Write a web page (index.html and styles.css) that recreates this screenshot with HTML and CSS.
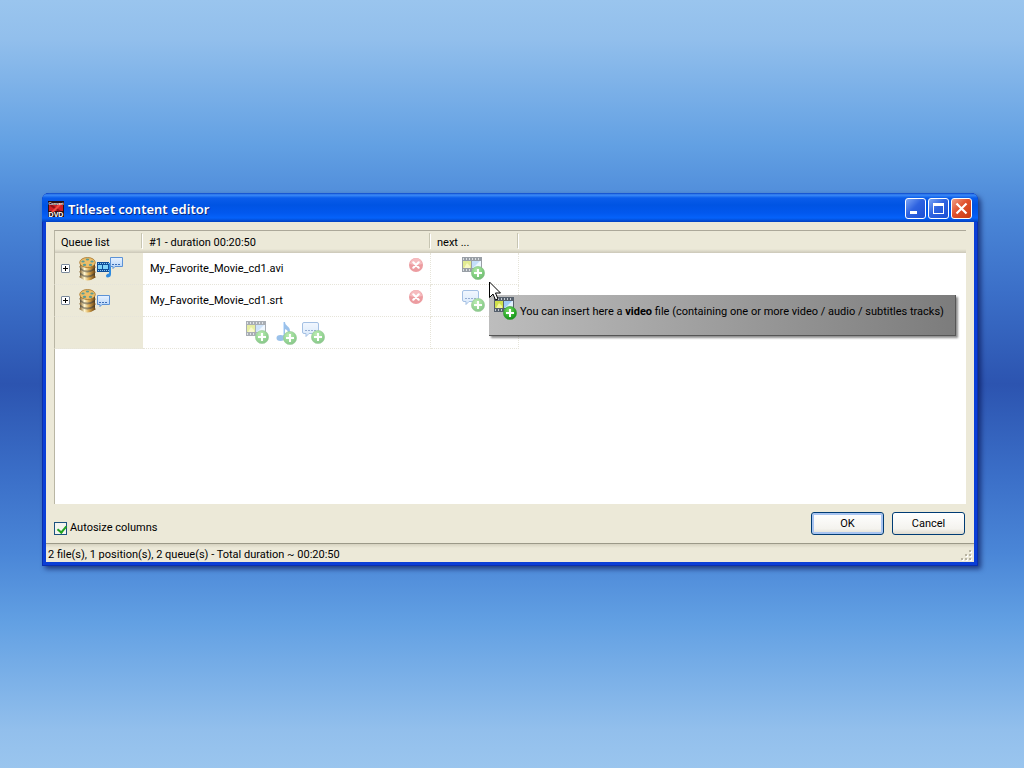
FILE: index.html
```html
<!DOCTYPE html>
<html lang="en">
<head>
    <meta charset="utf-8">
    <title>Titleset content editor</title>
    <meta name="viewport" content="width=device-width, initial-scale=1">
    <link rel="stylesheet" href="styles.css">
</head>
<body>

<svg class="defs" aria-hidden="true">
    <defs>
        <radialGradient id="g-green" cx="40%" cy="30%" r="75%">
            <stop offset="0" stop-color="#7fdc6c"/>
            <stop offset="0.6" stop-color="#2fae2c"/>
            <stop offset="1" stop-color="#128a17"/>
        </radialGradient>
        <linearGradient id="g-gold" x1="0" x2="1" y1="0" y2="0">
            <stop offset="0" stop-color="#8a6a38"/>
            <stop offset="0.3" stop-color="#fff6cf"/>
            <stop offset="0.6" stop-color="#d9a850"/>
            <stop offset="1" stop-color="#6b4516"/>
        </linearGradient>
        <linearGradient id="g-dark" x1="0" x2="1" y1="0" y2="0">
            <stop offset="0" stop-color="#5b5340"/>
            <stop offset="0.3" stop-color="#a89f82"/>
            <stop offset="1" stop-color="#4d3a1c"/>
        </linearGradient>
        <linearGradient id="g-sub" x1="0" x2="0" y1="0" y2="1">
            <stop offset="0" stop-color="#e6f1ff"/>
            <stop offset="1" stop-color="#b4d3f7"/>
        </linearGradient>
    </defs>
    <symbol id="plus" viewBox="0 0 14 14">
        <circle cx="7" cy="7" r="6.6" fill="url(#g-green)" stroke="#3c9b3a" stroke-width=".6"/>
        <path d="M7 3v8M3 7h8" stroke="#fff" stroke-width="2"/>
    </symbol>
    <symbol id="film" viewBox="0 0 24 24">
        <path fill="#56606c" d="M0 0h20v15H0z"/>
        <path fill="#cfdf4a" d="M1 4h8v7H1z"/>
        <path fill="#f4f59a" d="M2 11l3-5 3 3v2z"/>
        <path fill="#9fcbf8" d="M10 4h9v7h-9z"/>
        <path fill="#e2f2ff" d="M11 11l7-7h1v7z"/>
        <path stroke="#c3cad2" stroke-width="2" stroke-dasharray="1 2" d="M1 2h18M1 13h18"/>
        <use href="#plus" x="9" y="9" width="14" height="14"/>
    </symbol>
    <symbol id="note" viewBox="0 0 24 24">
        <ellipse cx="6.500" cy="17" rx="4" ry="3" fill="#3884d6"/>
        <path fill="#3884d6" d="M9 1h2c0 4 5 4 5 9 0 2-1 3-2 4 1-4-1-5-3-6v9H9z"/>
        <path fill="#9acbff" d="M9 1h1v13H9z"/>
        <use href="#plus" x="9" y="10" width="14" height="14"/>
    </symbol>
    <symbol id="sub" viewBox="0 0 24 24">
        <path fill="url(#g-sub)" stroke="#4c83c9" d="M2 1.500h13q1.500 0 1.500 1.500v8q0 1.500-1.500 1.500H7l-3 3v-3H2q-1.500 0-1.500-1.500V3q0-1.500 1.500-1.500z"/>
        <path stroke="#2f5fa8" stroke-dasharray="2 1" d="M3 9.500h12"/>
        <use href="#plus" x="9" y="9" width="14" height="14"/>
    </symbol>
    <symbol id="remove" viewBox="0 0 16 16">
        <circle cx="8" cy="8" r="7" fill="#db3b44"/>
        <path fill="#ef7b80" d="M2 7a6 6 0 0 1 12 0q-6 2-12 0z"/>
        <path stroke="#fff" stroke-width="2.200" stroke-linecap="round" d="M5.300 5.300l5.400 5.400M10.700 5.300l-5.400 5.400"/>
    </symbol>
    <symbol id="reels" viewBox="0 0 18 24">
        <path fill="url(#g-dark)" d="M1 6h15v14q-7 6-15 0z"/>
        <path fill="none" stroke="url(#g-gold)" stroke-width="2.800" d="M1 9q7 6 15 .1M1 14q7 6 15 .1M1 19q7 6 15 .1"/>
        <ellipse cx="8.500" cy="5.500" rx="7.800" ry="5" fill="#edbd68" stroke="#a4752c" stroke-width=".8"/>
        <g fill="#5a9c96">
            <ellipse cx="8.500" cy="2.500" rx="1.700" ry="1"/><ellipse cx="4" cy="4.500" rx="1.700" ry="1.100"/>
            <ellipse cx="13" cy="4.500" rx="1.700" ry="1.100"/><ellipse cx="5.500" cy="7.900" rx="1.700" ry="1.100"/>
            <ellipse cx="11.500" cy="7.900" rx="1.700" ry="1.100"/>
        </g>
    </symbol>
    <symbol id="bubble" viewBox="0 0 13 12">
        <path fill="url(#g-sub)" stroke="#5c92d6" d="M.500.500h12v9H5l-2 2v-2H.500z"/>
        <path stroke="#3d6fb8" stroke-dasharray="2 1" d="M2 7.500h9"/>
    </symbol>
    <symbol id="clip" viewBox="0 0 15 18">
        <path fill="#0e4f9a" d="M0 2h12v10H0z"/>
        <path fill="#7fd2f8" d="M1 5h4v4H1zM6 5h5v4H6z"/>
        <path stroke="#8cc4f2" stroke-dasharray="1 1" d="M1 3.500h11M1 10.500h11"/>
        <path fill="#2f8be0" d="M12 3h2v11q0 3-3 3.500-2 0-2-1.500 0-2 3-2.500z"/>
    </symbol>
</svg>

<div class="window">
    <div class="titlebar">
        <svg class="app-icon" viewBox="0 0 16 16" aria-hidden="true">
            <path fill="#2a1013" d="M0 0h16v16H0z"/>
            <path fill="#cf2027" d="M1 4h14v6H1z"/>
            <path fill="#8d1118" d="M3 3l10 7-2 1L2 5z"/>
            <path fill="#f04a3e" d="M12 2l2 1-8 8H3z"/>
            <text x="8" y="3.500" class="icon-top">Convert</text>
            <text x="8" y="15.500" class="icon-bottom">DVD</text>
        </svg>
        <h1>Titleset content editor</h1>
        <button type="button" class="caption" aria-label="Minimize">
            <svg viewBox="0 0 19 19"><path fill="#fff" d="M4 12h7v3H4z"/></svg>
        </button>
        <button type="button" class="caption" aria-label="Maximize">
            <svg viewBox="0 0 19 19"><path fill="#fff" fill-rule="evenodd" d="M4 4h11v11H4zM5 7v7h9V7z"/></svg>
        </button>
        <button type="button" class="caption close" aria-label="Close">
            <svg viewBox="0 0 19 19"><path stroke="#fff" stroke-width="2.200" d="M4.500 4.500l10 10M14.500 4.500l-10 10"/></svg>
        </button>
    </div>

    <div class="client">
        <div class="list">
            <table>
                <thead>
                    <tr>
                        <th class="col-queue">Queue list</th>
                        <th class="col-title">#1 - duration 00:20:50</th>
                        <th class="col-next">next ...</th>
                        <th class="col-rest"></th>
                    </tr>
                </thead>
                <tbody>
                    <tr>
                        <td class="queue">
                            <div class="cell">
                                <button type="button" class="expand" aria-label="Expand"></button>
                                <svg class="reels"><use href="#reels"/></svg>
                                <svg class="clip"><use href="#clip"/></svg>
                                <svg class="bubble raised"><use href="#bubble"/></svg>
                            </div>
                        </td>
                        <td>
                            <div class="cell">
                                <span class="name">My_Favorite_Movie_cd1.avi</span>
                                <button type="button" class="remove" aria-label="Remove"><svg><use href="#remove"/></svg></button>
                            </div>
                        </td>
                        <td><div class="cell add active"><button type="button" aria-label="Add video"><svg><use href="#film"/></svg></button></div></td>
                        <td class="rest"></td>
                    </tr>
                    <tr>
                        <td class="queue">
                            <div class="cell">
                                <button type="button" class="expand" aria-label="Expand"></button>
                                <svg class="reels"><use href="#reels"/></svg>
                                <svg class="bubble"><use href="#bubble"/></svg>
                            </div>
                        </td>
                        <td>
                            <div class="cell">
                                <span class="name">My_Favorite_Movie_cd1.srt</span>
                                <button type="button" class="remove" aria-label="Remove"><svg><use href="#remove"/></svg></button>
                            </div>
                        </td>
                        <td><div class="cell add"><button type="button" aria-label="Add subtitles"><svg><use href="#sub"/></svg></button></div></td>
                        <td class="rest"></td>
                    </tr>
                    <tr>
                        <td class="queue"></td>
                        <td>
                            <div class="cell add">
                                <button type="button" aria-label="Add video"><svg><use href="#film"/></svg></button>
                                <button type="button" aria-label="Add audio"><svg><use href="#note"/></svg></button>
                                <button type="button" aria-label="Add subtitles"><svg><use href="#sub"/></svg></button>
                            </div>
                        </td>
                        <td></td>
                        <td class="rest"></td>
                    </tr>
                </tbody>
            </table>
        </div>

        <div class="actions">
            <label class="check"><input type="checkbox" checked> Autosize columns</label>
            <button type="button" class="btn default">OK</button>
            <button type="button" class="btn">Cancel</button>
        </div>

        <div class="status">
            <span>2 file(s), 1 position(s), 2 queue(s) - Total duration ~ 00:20:50</span>
            <svg class="grip" viewBox="0 0 12 12" aria-hidden="true">
                <path fill="#fff" d="M9 1h2v2H9zM5 5h2v2H5zM9 5h2v2H9zM1 9h2v2H1zM5 9h2v2H5zM9 9h2v2H9z"/>
                <path fill="#b8b4a2" d="M8 0h2v2H8zM4 4h2v2H4zM8 4h2v2H8zM0 8h2v2H0zM4 8h2v2H4zM8 8h2v2H8z"/>
            </svg>
        </div>
    </div>

    <div class="tooltip" role="tooltip">
        <svg><use href="#film"/></svg>
        <span>You can insert here a <b>video</b> file (containing one or more video / audio / subtitles tracks)</span>
    </div>
    <svg class="cursor" viewBox="0 0 12 20" aria-hidden="true">
        <path fill="#fff" stroke="#000" d="M.500 1v15.500L4 13l2.500 6 2.500-1-2.500-6h5z"/>
    </svg>
</div>

</body>
</html>
```
FILE: styles.css
```css
* { box-sizing: border-box; }

body {
    margin: 0;
    min-height: 100vh;
    padding: 193px 46px 0 42px;
    font: 11px/14px Tahoma, Roboto, sans-serif;
    color: #000;
    background: linear-gradient(#9ac5ee 0%, #92bfec 5%, #62a0e3 19%, #4a86d7 28%, #3b6fc8 38%, #2c54b0 50%, #3b6fc8 62%, #4a86d7 72%, #62a0e3 81%, #92bfec 95%, #9ac5ee 100%) fixed;
}

svg { display: block; }

button {
    font: inherit;
    padding: 0;
}

.defs {
    position: absolute;
    width: 0;
    height: 0;
}

.window {
    position: relative;
    padding: 0 4px 4px;
    background: #0b3fd6;
    border-radius: 7px 7px 0 0;
    box-shadow: inset 0 0 0 1px #0a2fae, 3px 3px 5px rgba(0, 10, 70, 0.6);
}

/* title bar */

.titlebar {
    display: flex;
    align-items: center;
    gap: 2px;
    height: 29px;
    margin: 0 -4px;
    padding: 2px 6px 0 6px;
    border-radius: 7px 7px 0 0;
    background: linear-gradient(#0a45c8 0, #3c8bf7 2px, #0a5cea 5px, #0054e3 12px, #0258ee 20px, #0562fa 25px, #0341bf 29px);
}

.app-icon {
    width: 16px;
    height: 16px;
}

.icon-top, .icon-bottom {
    font-family: "Liberation Sans", sans-serif;
    font-weight: bold;
    fill: #fff;
    text-anchor: middle;
}

.icon-top { font-size: 4px; }

.icon-bottom { font-size: 7px; }

.titlebar h1 {
    flex: 1;
    margin: 0 0 0 2px;
    font: 600 13px/16px "Trebuchet MS", "Noto Sans", sans-serif;
    color: #fff;
    text-shadow: 1px 1px #0a2a80;
}

.caption {
    width: 21px;
    height: 21px;
    border: 1px solid #fff;
    border-radius: 3px;
    background: linear-gradient(135deg, #7ba5f5, #2e63e0 45%, #1c4fd4);
}

.close { background: linear-gradient(135deg, #f0a088, #e0512d 45%, #c83a12); }

/* list */

.client { background: #ece9d8; }

.list {
    margin: 0 8px;
    min-height: 282px;
    padding-top: 8px;
    background: linear-gradient(#b9b6a4, #b9b6a4) 0 8px / 1px 100% no-repeat,
        linear-gradient(#ece9d8 8px, #fff 8px);
}

table {
    width: 100%;
    table-layout: fixed;
    border-collapse: separate;
    border-spacing: 0;
}

th, td { padding: 0; }

th {
    height: 23px;
    padding: 2px 6px 0;
    font-weight: normal;
    text-align: left;
    background: linear-gradient(#ece9d8 18px, #cbc7b8);
    border-top: 1px solid #aca899;
}

th:first-child { border-left: 1px solid #b9b6a4; }

th:not(:last-child) {
    background: linear-gradient(#fff, #fff) right 3px / 1px 15px no-repeat,
        linear-gradient(#c7c5b2, #c7c5b2) right 1px top 2px / 1px 15px no-repeat,
        linear-gradient(#ece9d8 18px, #cbc7b8);
}

.col-queue { width: 89px; }

.col-title { width: 288px; }

.col-next { width: 88px; }

td {
    height: 32px;
    border-right: 1px dotted #e6e4d9;
    border-bottom: 1px dotted #e6e4d9;
}

td.queue {
    background: #ece9d8;
    border-left: 1px solid #b9b6a4;
    border-right: 0;
}

td.rest { border: 0; }

.cell {
    display: flex;
    align-items: center;
    height: 31px;
}

.queue .cell { padding-left: 6px; }

.name {
    flex: 1;
    padding-left: 7px;
}

.expand {
    width: 9px;
    height: 9px;
    margin-right: 9px;
    border: 1px solid #7b8a9c;
    border-radius: 1px;
    background: linear-gradient(#000, #000) 1px 3px / 5px 1px no-repeat,
        linear-gradient(#000, #000) 3px 1px / 1px 5px no-repeat, #fff;
}

.reels {
    width: 18px;
    height: 24px;
}

.clip {
    width: 15px;
    height: 18px;
}

.bubble {
    width: 13px;
    height: 12px;
}

.raised {
    align-self: flex-start;
    margin: 4px 0 0 -2px;
}

.remove, .add button {
    border: 0;
    background: none;
}

.remove {
    height: 16px;
    margin: 0 6px 8px 0;
    opacity: 0.5;
}

.remove svg {
    width: 16px;
    height: 16px;
}

.add {
    justify-content: center;
    gap: 4px;
    padding-right: 2px;
    opacity: 0.5;
}

.active { opacity: 0.6; }

.add svg, .tooltip svg {
    flex: none;
    width: 24px;
    height: 24px;
}

/* bottom */

.actions {
    display: flex;
    align-items: flex-start;
    gap: 8px;
    height: 39px;
    padding: 8px 9px 0 8px;
}

.check {
    flex: 1;
    display: flex;
    align-items: center;
    gap: 3px;
    padding-top: 9px;
}

.check input {
    appearance: none;
    width: 13px;
    height: 13px;
    margin: 0;
    border: 1px solid #1c5180;
    background: #f4f4ef;
}

.check input:checked::before {
    content: "";
    display: block;
    width: 4px;
    height: 7px;
    margin: 1px 0 0 4px;
    border: solid #21a121;
    border-width: 0 2px 2px 0;
    transform: rotate(40deg);
}

.btn {
    width: 73px;
    height: 23px;
    border: 1px solid #003c74;
    border-radius: 3px;
    background: linear-gradient(#fff, #f4f3ee 75%, #dfdbcf);
}

.default { box-shadow: inset 0 0 0 2px #a8c4f0; }

.status {
    display: flex;
    justify-content: space-between;
    height: 19px;
    padding: 4px 1px 0 2px;
    border-top: 1px solid #9b9988;
    background: linear-gradient(#d6d2c0, #ece9d8 4px);
}

.grip {
    width: 12px;
    height: 12px;
    margin-top: 2px;
}

/* pointer hint */

.tooltip {
    position: absolute;
    top: 102px;
    left: 447px;
    right: 22px;
    display: flex;
    align-items: flex-start;
    gap: 2px;
    height: 41px;
    padding: 2px 0 0 5px;
    border-bottom: 1px solid #555;
    border-right: 1px solid #555;
    background: linear-gradient(90deg, #bdbdbd, #7c7c7c);
    box-shadow: 2px 2px 2px rgba(0, 0, 0, 0.45);
    white-space: nowrap;
}

.tooltip span { padding-top: 8px; }

.cursor {
    position: absolute;
    top: 88px;
    left: 447px;
    width: 12px;
    height: 20px;
}
```
